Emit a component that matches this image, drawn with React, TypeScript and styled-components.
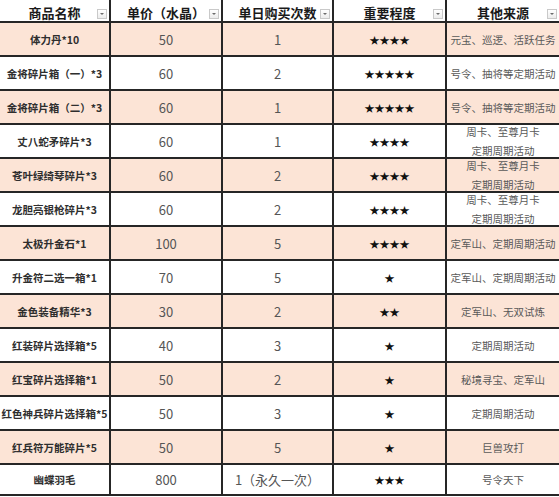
import React from "react";
import styled, { createGlobalStyle } from "styled-components";

const GlobalStyle = createGlobalStyle`
  html, body { margin: 0; padding: 0; background: #ffffff; }
  body { font-family: "Noto Sans CJK SC", "Noto Sans", sans-serif; }
`;

const LINE = "#262626";
const PINK = "#fce4d6";

const Table = styled.div`
  width: 559px;
  display: grid;
  grid-template-columns: 109px 110px 109px 111px 112px;
  grid-template-rows: 21px repeat(13, 32px) 29px;
  gap: 2px;
  background: ${LINE};
  border-bottom: 2px solid ${LINE};
`;

const HeadCell = styled.div`
  position: relative;
  background: #ffffff;
  display: flex;
  align-items: center;
  justify-content: center;
  padding-top: 4px;
  box-sizing: border-box;
  font-family: "Noto Sans CJK SC", sans-serif;
  font-weight: 700;
  font-size: 13px;
  color: #1a1a1a;
  white-space: nowrap;
`;

const FilterButton = styled.span`
  position: absolute;
  right: 2px;
  top: 9px;
  width: 10px;
  height: 10px;
  box-sizing: border-box;
  border: 1px solid #c9c9c9;
  background: linear-gradient(#ffffff, #ececec);
  display: flex;
  align-items: center;
  justify-content: center;
`;

const BaseCell = styled.div<{ $pink: boolean }>`
  background: ${(p) => (p.$pink ? PINK : "#ffffff")};
  display: flex;
  align-items: center;
  justify-content: center;
  text-align: center;
  overflow: hidden;
  white-space: nowrap;
  font-family: "Noto Sans CJK SC", sans-serif;
`;

const NameCell = styled(BaseCell)`
  font-weight: 700;
  font-size: 10.5px;
  color: #2e2e2e;
`;

const NumCell = styled(BaseCell)`
  font-size: 13px;
  color: #555555;
`;

const StarCell = styled(BaseCell)`
  font-size: 10px;
  color: #111111;
`;

const SourceCell = styled(BaseCell)`
  font-size: 10.5px;
  line-height: 19px;
  color: #595959;
  flex-direction: column;
`;

type Row = {
  name: string;
  price: string;
  times: string;
  stars: number;
  source: string[];
};

const rows: Row[] = [
  { name: "体力丹*10", price: "50", times: "1", stars: 4, source: ["元宝、巡逻、活跃任务"] },
  { name: "金将碎片箱（一）*3", price: "60", times: "2", stars: 5, source: ["号令、抽将等定期活动"] },
  { name: "金将碎片箱（二）*3", price: "60", times: "1", stars: 5, source: ["号令、抽将等定期活动"] },
  { name: "丈八蛇矛碎片*3", price: "60", times: "1", stars: 4, source: ["周卡、至尊月卡", "定期周期活动"] },
  { name: "苍叶绿绮琴碎片*3", price: "60", times: "2", stars: 4, source: ["周卡、至尊月卡", "定期周期活动"] },
  { name: "龙胆亮银枪碎片*3", price: "60", times: "2", stars: 4, source: ["周卡、至尊月卡", "定期周期活动"] },
  { name: "太极升金石*1", price: "100", times: "5", stars: 4, source: ["定军山、定期周期活动"] },
  { name: "升金符二选一箱*1", price: "70", times: "5", stars: 1, source: ["定军山、定期周期活动"] },
  { name: "金色装备精华*3", price: "30", times: "2", stars: 2, source: ["定军山、无双试炼"] },
  { name: "红装碎片选择箱*5", price: "40", times: "3", stars: 1, source: ["定期周期活动"] },
  { name: "红宝碎片选择箱*1", price: "50", times: "2", stars: 1, source: ["秘境寻宝、定军山"] },
  { name: "红色神兵碎片选择箱*5", price: "50", times: "3", stars: 1, source: ["定期周期活动"] },
  { name: "红兵符万能碎片*5", price: "50", times: "5", stars: 1, source: ["巨兽攻打"] },
  { name: "幽蝶羽毛", price: "800", times: "1（永久一次）", stars: 3, source: ["号令天下"] },
];

const headers = ["商品名称", "单价（水晶）", "单日购买次数", "重要程度", "其他来源"];

const Arrow = () => (
  <svg width="6" height="4" viewBox="0 0 6 4">
    <path d="M1 1 L5 1 L3 3 Z" fill="#6b6b6b" />
  </svg>
);

export default function App() {
  return (
    <>
      <GlobalStyle />
      <Table>
        {headers.map((h) => (
          <HeadCell key={h}>
            {h}
            <FilterButton>
              <Arrow />
            </FilterButton>
          </HeadCell>
        ))}
        {rows.map((r, i) => {
          const pink = i % 2 === 0;
          return (
            <React.Fragment key={r.name}>
              <NameCell $pink={pink}>{r.name}</NameCell>
              <NumCell $pink={pink}>{r.price}</NumCell>
              <NumCell $pink={pink}>{r.times}</NumCell>
              <StarCell $pink={pink}>{"★".repeat(r.stars)}</StarCell>
              <SourceCell $pink={pink}>
                {r.source.map((s) => (
                  <div key={s}>{s}</div>
                ))}
              </SourceCell>
            </React.Fragment>
          );
        })}
      </Table>
    </>
  );
}
